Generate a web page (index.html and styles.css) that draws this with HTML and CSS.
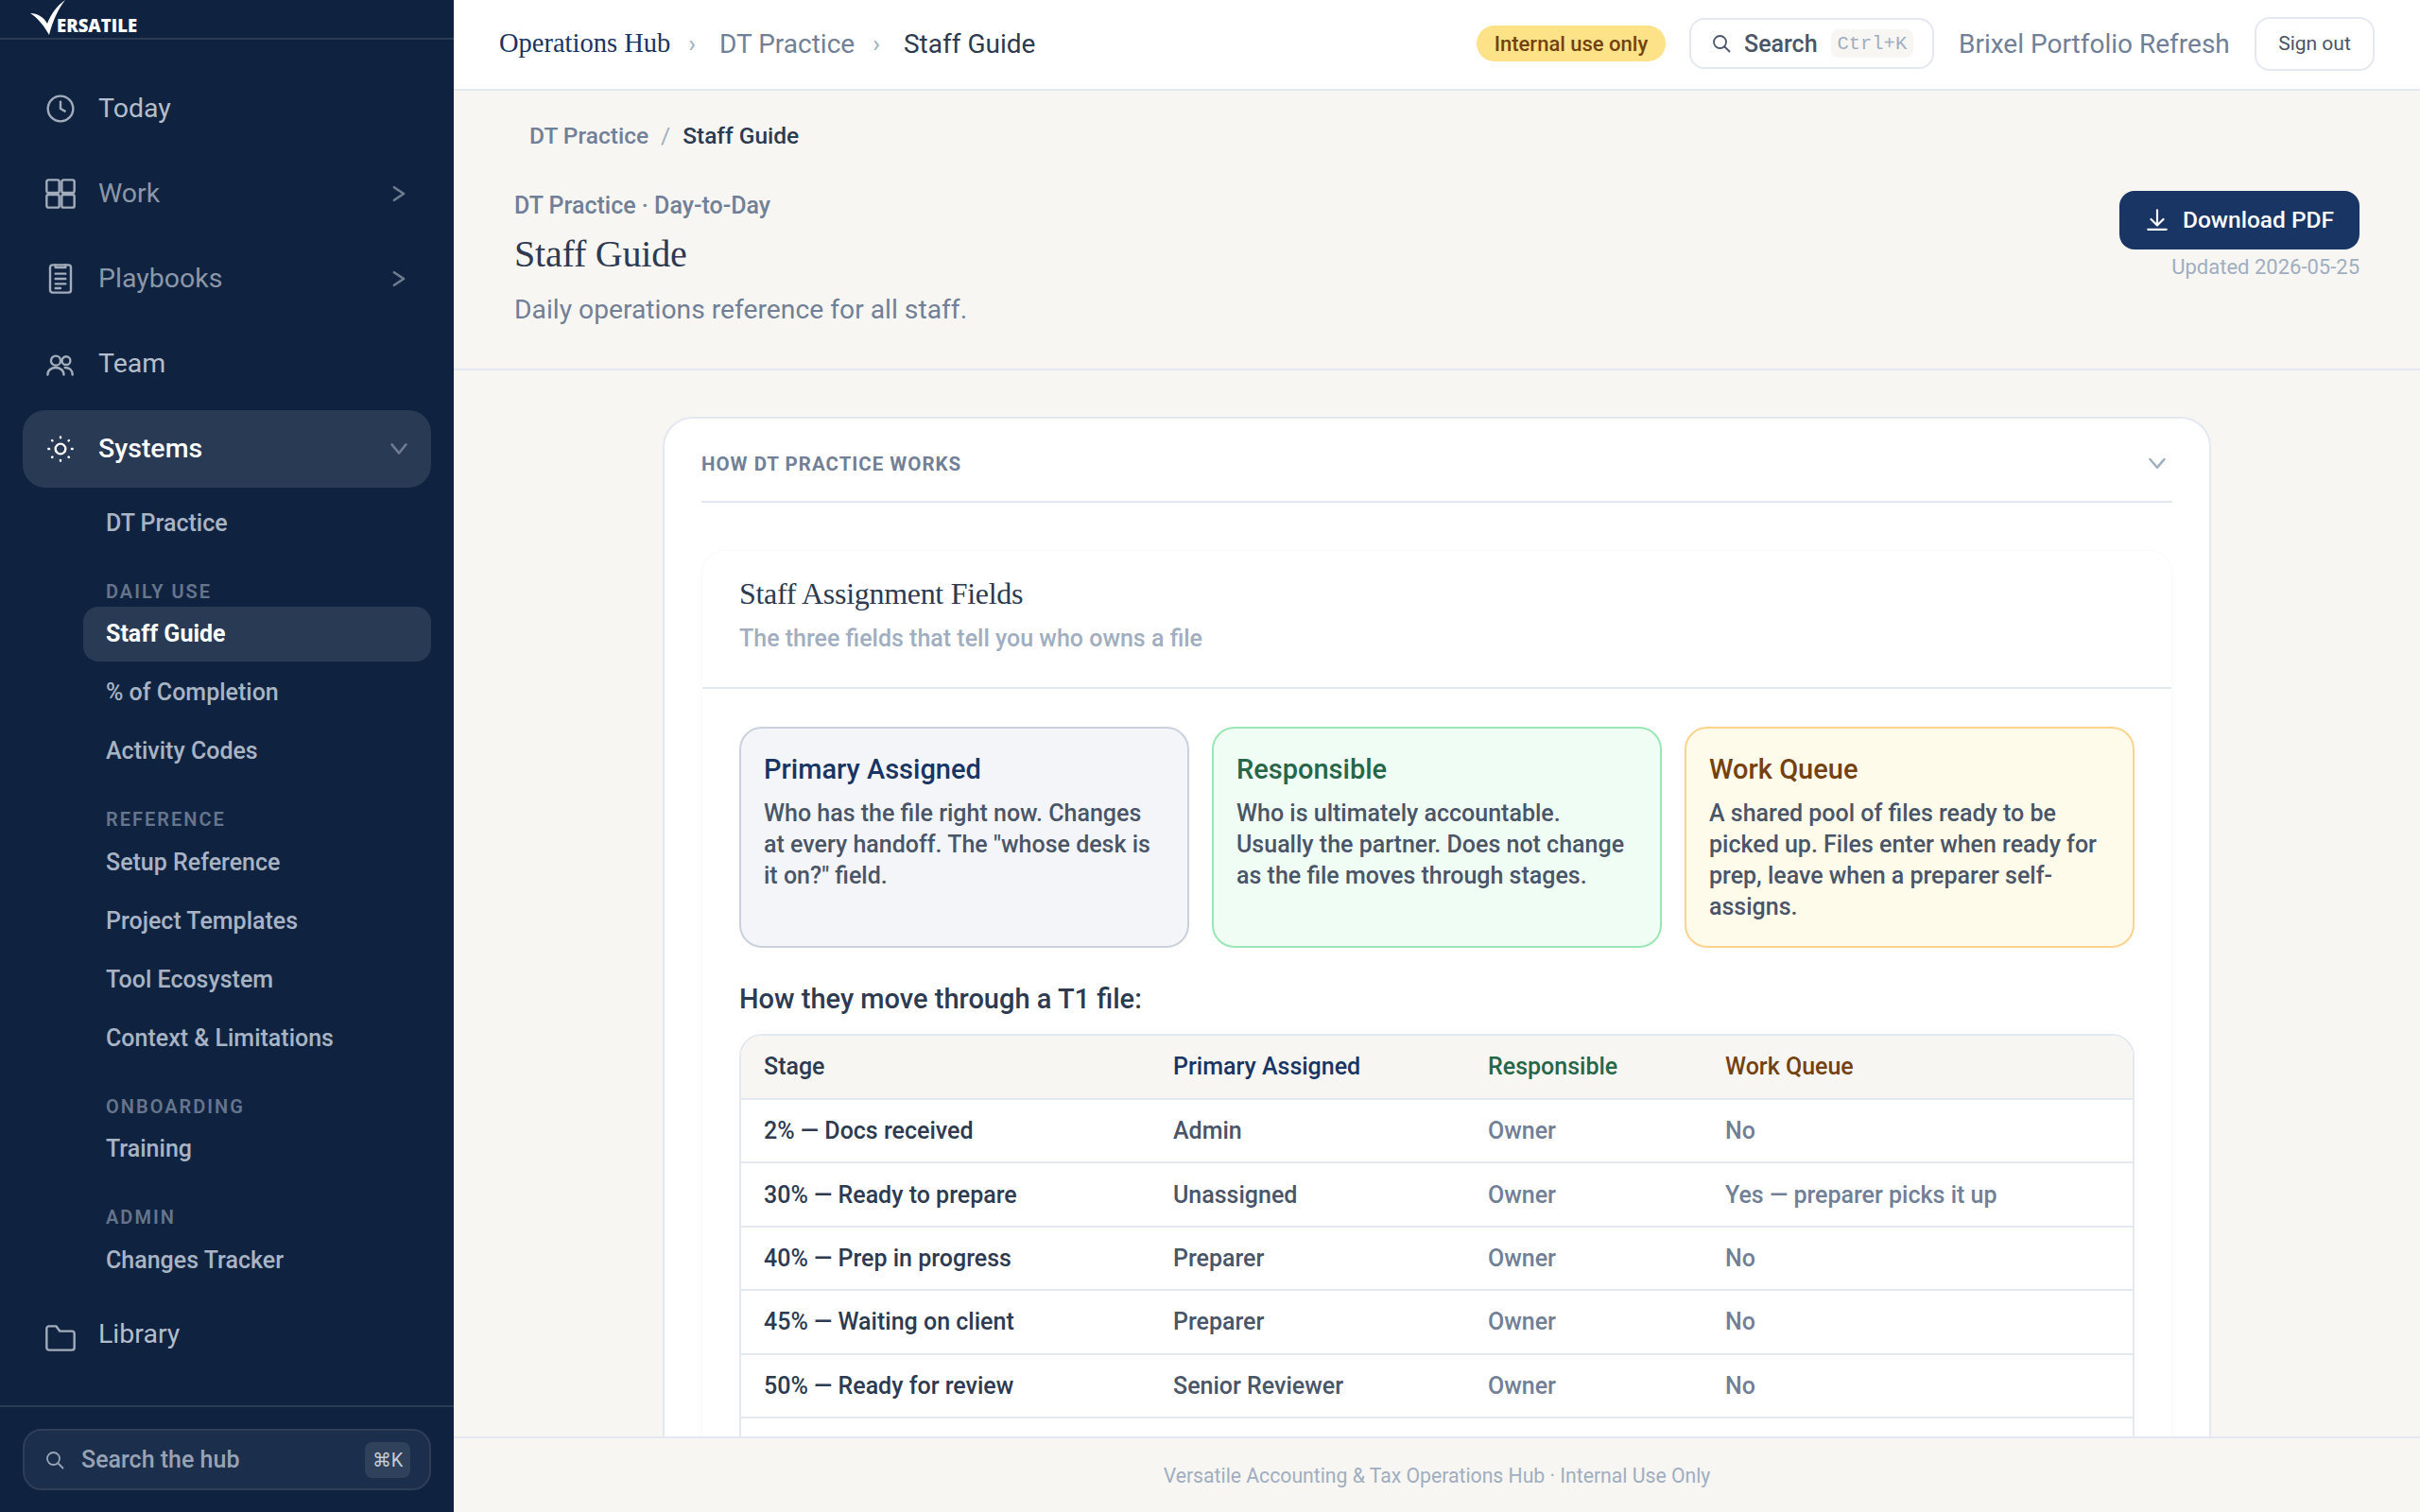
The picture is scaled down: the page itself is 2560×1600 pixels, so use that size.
FILE: index.html
```html
<!DOCTYPE html>
<html lang="en">
<head>
<meta charset="utf-8">
<title>Staff Guide</title>
<link rel="stylesheet" href="styles.css">
</head>
<body>
<div class="app">
<aside class="sidebar">
  <div class="brand">
    <svg class="brand-mark" viewBox="0 0 40 38" aria-hidden="true"><path d="M0 14C8 14 14 18 18 25C22 15 28 6 37 0C30 9 24 21 20 37C15 28 9 20 0 14Z" fill="#fff"/></svg>
    <span class="brand-text">ERSATILE</span>
  </div>
  <nav class="nav">
    <a class="nav-item bright"><svg class="ico" viewBox="0 0 24 24"><circle cx="12" cy="12" r="10"/><path d="M12 6.500V12l3.500 2"/></svg><span>Today</span></a>
    <a class="nav-item"><svg class="ico" viewBox="0 0 24 24"><rect x="1" y="1" width="10" height="10.300" rx="1.500"/><rect x="13" y="1" width="10" height="10.300" rx="1.500"/><rect x="1" y="12.700" width="10" height="10.300" rx="1.500"/><rect x="13" y="12.700" width="10" height="10.300" rx="1.500"/></svg><span>Work</span><svg class="chev" viewBox="0 0 16 16"><path d="M3.500 2l9 6-9 6"/></svg></a>
    <a class="nav-item"><svg class="ico" viewBox="0 0 24 24"><rect x="3.750" y="1" width="16.500" height="22" rx="2"/><path d="M8 1v2h8V1M8 8h8M8 12h8M8 16h8M8 19.500h4"/></svg><span>Playbooks</span><svg class="chev" viewBox="0 0 16 16"><path d="M3.500 2l9 6-9 6"/></svg></a>
    <a class="nav-item bright"><svg class="ico" viewBox="0 0 24 24"><circle cx="8.250" cy="9.500" r="3.800"/><circle cx="16.500" cy="9.500" r="3.300"/><path d="M1.800 20.600c0-3.500 3-5.600 6.400-5.600s6.400 2.100 6.400 5.600M15.500 15c3.500 0 6 2 6 5.600"/></svg><span>Team</span></a>
    <a class="nav-item active"><svg class="ico ico-white" viewBox="0 0 24 24"><circle cx="12" cy="12" r="4"/><path d="M12 2.500v.6M12 20.900v.6M2.500 12h.6M20.900 12h.6M5.300 5.300l.3.3M18.400 18.400l.3.3M18.700 5.300l-.3.3M5.600 18.400l-.3.3"/></svg><span>Systems</span><svg class="chev" viewBox="0 0 16 16"><path d="M1.500 4L8 12l6.500-8"/></svg></a>
    <div class="sub">
      <a class="sub-item">DT Practice</a>
      <div class="sub-label">DAILY USE</div>
      <a class="sub-item current">Staff Guide</a>
      <a class="sub-item">% of Completion</a>
      <a class="sub-item">Activity Codes</a>
      <div class="sub-label">REFERENCE</div>
      <a class="sub-item">Setup Reference</a>
      <a class="sub-item">Project Templates</a>
      <a class="sub-item">Tool Ecosystem</a>
      <a class="sub-item">Context &amp; Limitations</a>
      <div class="sub-label">ONBOARDING</div>
      <a class="sub-item">Training</a>
      <div class="sub-label">ADMIN</div>
      <a class="sub-item">Changes Tracker</a>
    </div>
    <a class="nav-item bright"><svg class="ico ico-folder" viewBox="0 0 24 24"><path d="M1 6A2 2 0 0 1 3 4h5.500l3 4H21a2 2 0 0 1 2 2v11a2 2 0 0 1-2 2H3a2 2 0 0 1-2-2Z"/></svg><span>Library</span></a>
  </nav>
  <div class="side-foot">
    <div class="hub-search">
      <svg class="hub-ico" viewBox="0 0 20 20"><circle cx="8.500" cy="8.500" r="6.500"/><path d="M13.500 13.500L18.500 18.500"/></svg>
      <span class="hub-text">Search the hub</span>
      <kbd class="hub-kbd">⌘K</kbd>
    </div>
  </div>
</aside>
<div class="main">
  <header class="topbar">
    <span class="top-brand">Operations Hub</span>
    <span class="top-sep">›</span>
    <span class="top-link">DT Practice</span>
    <span class="top-sep">›</span>
    <span class="top-current">Staff Guide</span>
    <div class="top-right">
      <span class="badge">Internal use only</span>
      <div class="top-search">
        <svg class="top-search-ico" viewBox="0 0 20 20"><circle cx="8.500" cy="8.500" r="6.500"/><path d="M13.500 13.500L18.500 18.500"/></svg>
        <span>Search</span>
        <kbd class="top-kbd">Ctrl+K</kbd>
      </div>
      <span class="project">Brixel Portfolio Refresh</span>
      <button class="signout">Sign out</button>
    </div>
  </header>
  <div class="scroll">
    <section class="page-head">
      <div class="crumb"><span class="crumb-link">DT Practice</span><span class="crumb-sep">/</span><span class="crumb-cur">Staff Guide</span></div>
      <div class="head-row">
        <div>
          <div class="eyebrow">DT Practice · Day-to-Day</div>
          <h1 class="title">Staff Guide</h1>
          <p class="subtitle">Daily operations reference for all staff.</p>
        </div>
        <div class="head-actions">
          <button class="download"><svg class="dl-ico" viewBox="0 0 24 24"><path d="M12 3v14M6 12l6 6 6-6M3 22h18"/></svg>Download PDF</button>
          <div class="updated">Updated 2026-05-25</div>
        </div>
      </div>
    </section>
    <section class="content">
      <div class="card">
        <div class="card-head">
          <span class="card-head-title">HOW DT PRACTICE WORKS</span>
          <svg class="card-chev" viewBox="0 0 16 16"><path d="M2 4l6 7 6-7"/></svg>
        </div>
        <div class="inner">
          <div class="inner-head">
            <h2 class="inner-title">Staff Assignment Fields</h2>
            <p class="inner-sub">The three fields that tell you who owns a file</p>
          </div>
          <div class="inner-body">
            <div class="fields">
              <div class="field f-primary"><h3>Primary Assigned</h3><p>Who has the file right now. Changes at every handoff. The "whose desk is it on?" field.</p></div>
              <div class="field f-resp"><h3>Responsible</h3><p>Who is ultimately accountable. Usually the partner. Does not change as the file moves through stages.</p></div>
              <div class="field f-queue"><h3>Work Queue</h3><p>A shared pool of files ready to be picked up. Files enter when ready for prep, leave when a preparer self-assigns.</p></div>
            </div>
            <h4 class="move">How they move through a T1 file:</h4>
            <div class="table-wrap">
              <table class="stages">
                <thead><tr><th class="c1">Stage</th><th class="c2 navy">Primary Assigned</th><th class="c3 green">Responsible</th><th class="brown">Work Queue</th></tr></thead>
                <tbody>
                  <tr><td class="dark">2% — Docs received</td><td class="mid">Admin</td><td class="soft">Owner</td><td class="soft">No</td></tr>
                  <tr><td class="dark">30% — Ready to prepare</td><td class="mid">Unassigned</td><td class="soft">Owner</td><td class="soft">Yes — preparer picks it up</td></tr>
                  <tr><td class="dark">40% — Prep in progress</td><td class="mid">Preparer</td><td class="soft">Owner</td><td class="soft">No</td></tr>
                  <tr><td class="dark">45% — Waiting on client</td><td class="mid">Preparer</td><td class="soft">Owner</td><td class="soft">No</td></tr>
                  <tr><td class="dark">50% — Ready for review</td><td class="mid">Senior Reviewer</td><td class="soft">Owner</td><td class="soft">No</td></tr>
                  <tr><td></td><td></td><td></td><td></td></tr>
                </tbody>
              </table>
            </div>
          </div>
        </div>
      </div>
    </section>
  </div>
  <footer class="footer">Versatile Accounting &amp; Tax Operations Hub · Internal Use Only</footer>
</div>
</div>
</body>
</html>
```
FILE: styles.css
```css
* { box-sizing: border-box; }
html, body { margin: 0; height: 100%; }
body { font-family: Roboto, "Noto Sans", sans-serif; color: #2d3a50; background: #f7f6f2; }
h1, h2, h3, h4, p { margin: 0; }
kbd { font: inherit; }
.app { display: flex; height: 1600px; overflow: hidden; }

.sidebar { width: 480px; flex: none; background: #0f2341; display: flex; flex-direction: column; }
.brand { height: 42px; flex: none; border-bottom: 2px solid #2a3b55; padding-left: 32px; display: flex; align-items: flex-end; overflow: hidden; }
.brand-mark { width: 40px; height: 38px; flex: none; margin-right: -12px; margin-bottom: 2px; }
.brand-text { color: #fff; font-family: "Open Sans", sans-serif; font-weight: 800; font-size: 18.500px; line-height: 24px; padding-bottom: 1px; }
.nav { flex: 1; padding: 32px 24px 0; display: flex; flex-direction: column; gap: 8px; }
.nav-item { height: 82px; flex: none; border-radius: 24px; padding: 0 25px 0 24px; display: flex; align-items: center; gap: 24px; color: #8b97a8; font-size: 28.500px; line-height: 40px; }
.nav-item.bright { color: #b3bdcc; }
.nav-item span { flex: 1; }
.nav-item.active { background: #293a54; color: #fff; font-weight: 500; }
.ico { width: 32px; height: 32px; flex: none; fill: none; stroke: #a3acba; stroke-width: 1.800; stroke-linecap: round; stroke-linejoin: round; }
.ico-white { stroke: #fff; }
.ico-folder { margin-top: 4px; }
.chev { width: 18px; height: 18px; flex: none; fill: none; stroke: #6f7c8f; stroke-width: 2.400; stroke-linecap: round; stroke-linejoin: round; }
.sub { display: flex; flex-direction: column; gap: 4px; padding-left: 64px; margin-bottom: 1px; }
.sub-item { height: 58px; border-radius: 16px; padding: 0 24px; display: flex; align-items: center; color: #a8b3c4; font-size: 25px; font-weight: 500; }
.sub-item.current { background: #293a54; color: #fff; font-weight: 700; }
.sub-label { margin: 27.500px 0 0 24px; height: 24px; line-height: 24px; color: #66758b; font-size: 20px; font-weight: 600; letter-spacing: 2px; }
.side-foot { flex: none; border-top: 2px solid #2a3b55; padding: 23px 24px 23px; }
.hub-search { height: 65px; border: 2px solid #2e3e58; border-radius: 20px; background: #1b2e4b; display: flex; align-items: center; padding: 0 20px 0 22px; gap: 18px; }
.hub-ico { width: 20px; height: 20px; flex: none; fill: none; stroke: #97a3b5; stroke-width: 1.800; stroke-linecap: round; }
.hub-text { flex: 1; color: #97a3b5; font-size: 25px; font-weight: 500; }
.hub-kbd { width: 48px; height: 38px; border-radius: 8px; background: #30415b; color: #c4cbd6; font-size: 20px; display: flex; align-items: center; justify-content: center; }

.main { flex: 1; min-width: 0; display: flex; flex-direction: column; }
.topbar { height: 96px; flex: none; background: #fff; border-bottom: 2px solid #e4e8f1; padding: 0 48px 2px; display: flex; align-items: center; font-size: 28px; }
.top-brand { font-family: "Liberation Serif", serif; font-size: 28.500px; color: #1a3560; }
.top-sep { color: #a0aec0; font-size: 26px; margin: 0 25px 0 19px; }
.top-link { color: #718096; }
.top-current { color: #2d3a50; }
.top-right { margin-left: auto; display: flex; align-items: center; }
.badge { width: 200px; height: 38px; border-radius: 19px; background: #fde288; color: #744210; font-size: 22px; font-weight: 500; display: flex; align-items: center; justify-content: center; margin-right: 25px; }
.top-search { width: 259px; height: 54px; border: 2px solid #e4e8f1; border-radius: 16px; display: flex; align-items: center; padding: 0 20px 0 22px; gap: 14px; color: #4a5568; font-size: 25px; font-weight: 500; margin-right: 26px; }
.top-search-ico { width: 20px; height: 20px; flex: none; fill: none; stroke: #4a5568; stroke-width: 1.800; stroke-linecap: round; }
.top-kbd { margin-left: auto; width: 90px; height: 30px; border-radius: 8px; background: #f7f6f2; color: #a0aec0; font-family: "Liberation Mono", monospace; font-size: 20.500px; font-weight: 400; display: flex; align-items: center; justify-content: center; }
.project { width: 313px; white-space: nowrap; color: #718096; }
.signout { width: 127px; height: 57px; background: #fff; border: 2px solid #e4e8f1; border-radius: 16px; color: #4a5568; font: 400 21px Roboto, sans-serif; padding: 0; }

.scroll { flex: 1; min-height: 0; overflow: hidden; }
.page-head { height: 296px; border-bottom: 2px solid #e4e8f1; padding: 30px 64px 0; }
.crumb { padding-left: 16px; height: 34px; display: flex; align-items: center; font-size: 24.500px; font-weight: 500; }
.crumb-link { color: #718096; }
.crumb-sep { color: #a0aec0; margin: 0 13px; font-weight: 400; }
.crumb-cur { color: #2d3a50; }
.head-row { margin-top: 41px; display: flex; justify-content: space-between; align-items: flex-start; }
.eyebrow { color: #718096; font-size: 25px; font-weight: 500; line-height: 32px; padding-top: 1px; height: 32px; }
.title { font-family: "Liberation Serif", serif; font-weight: 400; font-size: 40px; line-height: 52px; margin-top: 10px; color: #2d3a50; letter-spacing: -0.200px; }
.subtitle { color: #718096; font-size: 28.250px; line-height: 40px; margin-top: 13px; }
.head-actions { display: flex; flex-direction: column; align-items: flex-end; padding-top: 1px; }
.download { width: 254px; height: 62px; border: 0; border-radius: 16px; background: #183563; color: #fff; font: 500 24.500px Roboto, sans-serif; display: flex; align-items: center; justify-content: center; gap: 14px; padding: 0 0 2px; }
.dl-ico { width: 26px; height: 26px; fill: none; stroke: #fff; stroke-width: 2; stroke-linecap: round; stroke-linejoin: round; }
.updated { color: #a0aec0; font-size: 22px; line-height: 30px; margin-top: 4px; }

.content { padding-top: 49px; }
.card { width: 1638px; margin: 0 auto; background: #fff; border: 2px solid #e4e8f1; border-radius: 32px; padding: 0 39px; }
.card-head { height: 89px; border-bottom: 2px solid #e4e8f1; display: flex; align-items: center; justify-content: space-between; padding: 8px 6px 0 0; }
.card-head-title { color: #718096; font-size: 20.500px; font-weight: 700; letter-spacing: 1px; }
.card-chev { width: 20px; height: 20px; fill: none; stroke: #a0aec0; stroke-width: 2; stroke-linecap: round; stroke-linejoin: round; }
.inner { margin-top: 50px; border: 1px solid #fafafa; border-radius: 24px; }
.inner-head { padding: 23px 39px 35px; border-bottom: 2px solid #e4e8f1; }
.inner-title { font-family: "Liberation Serif", serif; font-weight: 400; font-size: 32px; line-height: 44px; color: #2d3a50; letter-spacing: -0.300px; }
.inner-sub { margin-top: 9px; color: #a0aec0; font-size: 25px; font-weight: 500; line-height: 33px; }
.inner-body { padding: 40px 39px 0; }
.fields { display: grid; grid-template-columns: repeat(3, 1fr); gap: 24px; }
.field { height: 234px; border: 2px solid; border-radius: 24px; padding: 23px 24px 0; }
.field h3 { font-size: 29px; line-height: 40px; font-weight: 500; }
.field p { margin-top: 10px; font-size: 25px; line-height: 33px; font-weight: 500; color: #4a5568; }
.f-primary { background: #f4f5f8; border-color: #cbd1dc; }
.f-primary h3 { color: #183563; }
.f-resp { background: #effdf4; border-color: #9ae6b4; }
.f-resp h3 { color: #276749; }
.f-queue { background: #fffbeb; border-color: #fbd38d; }
.f-queue h3 { color: #744210; }
.move { margin-top: 34px; font-size: 29px; line-height: 40px; font-weight: 500; color: #2d3a50; }
.table-wrap { margin-top: 17px; border: 2px solid #e4e8f1; border-radius: 24px; overflow: hidden; }
.stages { width: 100%; border-collapse: separate; border-spacing: 0; table-layout: fixed; font-size: 25px; }
.stages th, .stages td { text-align: left; padding: 0 24px; }
.stages th { height: 68px; background: #f7f6f2; border-bottom: 2px solid #e4e8f1; font-weight: 500; padding-bottom: 2px; }
.stages td { height: 67.400px; border-bottom: 2px solid #e4e8f1; font-weight: 500; }
.c1 { width: 433px; }
.c2 { width: 333px; }
.c3 { width: 251px; }
.navy { color: #183563; }
.green { color: #276749; }
.brown { color: #744210; }
.dark { color: #2d3a50; }
.mid { color: #4a5568; }
.soft { color: #718096; }

.footer { height: 80px; flex: none; background: #f7f6f2; border-top: 2px solid #e4e8f1; display: flex; align-items: center; justify-content: center; color: #a0aec0; font-size: 21.200px; }
```
